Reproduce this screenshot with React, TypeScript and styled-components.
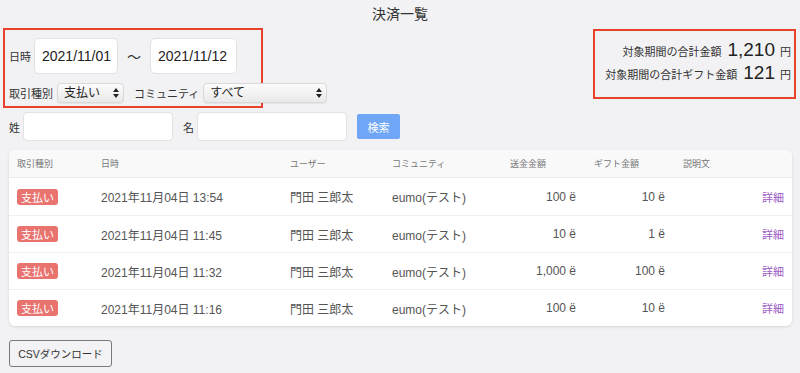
import React from "react";
import styled, { createGlobalStyle } from "styled-components";

const GlobalStyle = createGlobalStyle`
  body {
    margin: 0;
    background: #f2f2f4;
    font-family: "Liberation Sans", "Noto Sans CJK JP", sans-serif;
    color: #333;
  }
  * { box-sizing: border-box; }
`;

type Payment = {
  date: string;
  user: string;
  community: string;
  amount: string;
  gift: string;
};

const payments: Payment[] = [
  { date: "2021年11月04日 13:54", user: "門田 三郎太", community: "eumo(テスト)", amount: "100", gift: "10" },
  { date: "2021年11月04日 11:45", user: "門田 三郎太", community: "eumo(テスト)", amount: "10", gift: "1" },
  { date: "2021年11月04日 11:32", user: "門田 三郎太", community: "eumo(テスト)", amount: "1,000", gift: "100" },
  { date: "2021年11月04日 11:16", user: "門田 三郎太", community: "eumo(テスト)", amount: "100", gift: "10" },
];

const SelectArrows = () => (
  <svg width="6" height="10" viewBox="0 0 6 10">
    <path d="M3 0 L6 4 L0 4 Z" fill="#222" />
    <path d="M0 6 L6 6 L3 10 Z" fill="#222" />
  </svg>
);

const App = () => {
  return (
    <Page>
      <GlobalStyle />
      <Title>決済一覧</Title>
      <TopRow>
        <FilterBox>
          <Row>
            <Label>日時</Label>
            <DateInput w={84} value="2021/11/01" readOnly />
            <Tilde>～</Tilde>
            <DateInput w={87} value="2021/11/12" readOnly />
          </Row>
          <SelectRow>
            <Label>取引種別</Label>
            <SelectWrap>
              <Select w={67} defaultValue="pay">
                <option value="pay">支払い</option>
              </Select>
              <ArrowSlot><SelectArrows /></ArrowSlot>
            </SelectWrap>
            <Label gap={10}>コミュニティ</Label>
            <SelectWrap>
              <Select w={124} defaultValue="all">
                <option value="all">すべて</option>
              </Select>
              <ArrowSlot><SelectArrows /></ArrowSlot>
            </SelectWrap>
          </SelectRow>
        </FilterBox>
        <TotalsBox>
          <TotalLine>
            対象期間の合計金額<Amount>1,210</Amount><Yen>円</Yen>
          </TotalLine>
          <TotalLine>
            対象期間の合計ギフト金額<Amount>121</Amount><Yen>円</Yen>
          </TotalLine>
        </TotalsBox>
      </TopRow>
      <NameRow>
        <Label>姓</Label>
        <NameInput />
        <Label gap={10}>名</Label>
        <NameInput />
        <SearchButton>検索</SearchButton>
      </NameRow>
      <Card>
        <HeadRow>
          <HeadCell>取引種別</HeadCell>
          <HeadCell>日時</HeadCell>
          <HeadCell>ユーザー</HeadCell>
          <HeadCell>コミュニティ</HeadCell>
          <HeadCell>送金金額</HeadCell>
          <HeadCell>ギフト金額</HeadCell>
          <HeadCell>説明文</HeadCell>
          <HeadCell />
        </HeadRow>
        {payments.map((p, i) => (
          <BodyRow key={i}>
            <Cell><Badge>支払い</Badge></Cell>
            <Cell>{p.date}</Cell>
            <Cell>{p.user}</Cell>
            <Cell>{p.community}</Cell>
            <MoneyCell>{p.amount} ë</MoneyCell>
            <MoneyCell>{p.gift} ë</MoneyCell>
            <Cell />
            <DetailLink>詳細</DetailLink>
          </BodyRow>
        ))}
      </Card>
      <CsvButton>CSVダウンロード</CsvButton>
    </Page>
  );
};

export default App;

const Page = styled.div`
  width: 800px;
  min-height: 373px;
`;

const Title = styled.div`
  height: 28px;
  line-height: 28px;
  text-align: center;
  font-size: 14px;
  color: #333;
`;

const TopRow = styled.div`
  display: flex;
  justify-content: space-between;
  align-items: flex-start;
  padding: 0 4px 0 3px;
`;

const Marked = styled.div`
  border: 2px solid #e8412c;
`;

const FilterBox = styled(Marked)`
  width: 260px;
  height: 80px;
  padding: 8px 0 0 4px;
  overflow: visible;
`;

const TotalsBox = styled(Marked)`
  width: 203px;
  height: 70px;
  margin-top: 1px;
  padding: 8px 3px 0 0;
`;

const TotalLine = styled.div`
  height: 23px;
  display: flex;
  justify-content: flex-end;
  align-items: baseline;
  font-size: 11px;
  color: #333;
  white-space: nowrap;
`;

const Amount = styled.span`
  font-size: 19px;
  margin-left: 6px;
  color: #222;
`;

const Yen = styled.span`
  font-size: 11px;
  margin-left: 5px;
`;

const Row = styled.div`
  display: flex;
  align-items: center;
`;

const SelectRow = styled(Row)`
  margin-top: 9px;
  height: 20px;
  white-space: nowrap;
`;

const Label = styled.span<{ gap?: number }>`
  font-size: 11px;
  color: #333;
  margin-left: ${({ gap }) => gap || 0}px;
  margin-right: 3px;
  white-space: nowrap;
`;

const DateInput = styled.input<{ w: number }>`
  width: ${({ w }) => w}px;
  height: 36px;
  border: 1px solid #e2e2e2;
  border-radius: 5px;
  background: #fff;
  padding: 0 0 0 7px;
  font-family: inherit;
  font-size: 14px;
  color: #222;
  outline: none;
`;

const Tilde = styled.span`
  font-size: 14px;
  margin: 0 9px;
  color: #333;
`;

const SelectWrap = styled.span`
  position: relative;
  display: inline-flex;
  margin-left: 1px;
`;

const Select = styled.select<{ w: number }>`
  appearance: none;
  width: ${({ w }) => w}px;
  height: 20px;
  border: 1px solid #d8d8d8;
  border-radius: 4px;
  background: linear-gradient(#fcfcfc, #e9e9e9);
  box-shadow: 0 1px 1px rgba(0, 0, 0, 0.06);
  padding: 0 6px;
  font-family: inherit;
  font-size: 12px;
  color: #222;
  outline: none;
`;

const ArrowSlot = styled.span`
  position: absolute;
  right: 5px;
  top: 5px;
  display: flex;
  pointer-events: none;
`;

const NameRow = styled.div`
  display: flex;
  align-items: center;
  margin-top: 4px;
  padding-left: 9px;
`;

const NameInput = styled.input`
  width: 150px;
  height: 29px;
  border: 1px solid #e2e2e2;
  border-radius: 4px;
  background: #fff;
  outline: none;
`;

const SearchButton = styled.button`
  width: 43px;
  height: 25px;
  margin-left: 10px;
  border: none;
  border-radius: 2px;
  background: #6fa6f6;
  color: #fff;
  font-family: inherit;
  font-size: 11px;
  padding: 0;
`;

const Card = styled.div`
  width: 783px;
  margin: 9px 0 0 9px;
  background: #fff;
  border-radius: 6px;
  box-shadow: 0 1px 3px rgba(0, 0, 0, 0.12);
  overflow: hidden;
`;

const Grid = styled.div`
  display: grid;
  grid-template-columns: 84px 189px 102px 118px 84px 89px 1fr auto;
  align-items: center;
  padding: 0 8px;
`;

const HeadRow = styled(Grid)`
  height: 28px;
  background: #f9f9fa;
  border-bottom: 1px solid #ececee;
`;

const HeadCell = styled.div`
  font-size: 9px;
  color: #777;
  white-space: nowrap;
`;

const BodyRow = styled(Grid)`
  height: 37px;
  & + & {
    border-top: 1px solid #efeff1;
  }
`;

const Cell = styled.div`
  font-size: 12px;
  color: #555;
  white-space: nowrap;
`;

const MoneyCell = styled(Cell)`
  text-align: right;
  padding-right: 18px;
`;

const Badge = styled.span`
  display: inline-flex;
  align-items: center;
  height: 16px;
  padding: 0 4px;
  border-radius: 3px;
  background: #e8736f;
  color: #fff;
  font-size: 11px;
`;

const DetailLink = styled.a`
  font-size: 11px;
  color: #9d5cc3;
  cursor: pointer;
`;

const CsvButton = styled.button`
  display: block;
  width: 103px;
  height: 27px;
  margin: 14px 0 0 9px;
  border: 1px solid #7a7a7a;
  border-radius: 3px;
  background: #f3f3f5;
  font-family: inherit;
  font-size: 10.5px;
  color: #333;
  padding: 0;
`;
